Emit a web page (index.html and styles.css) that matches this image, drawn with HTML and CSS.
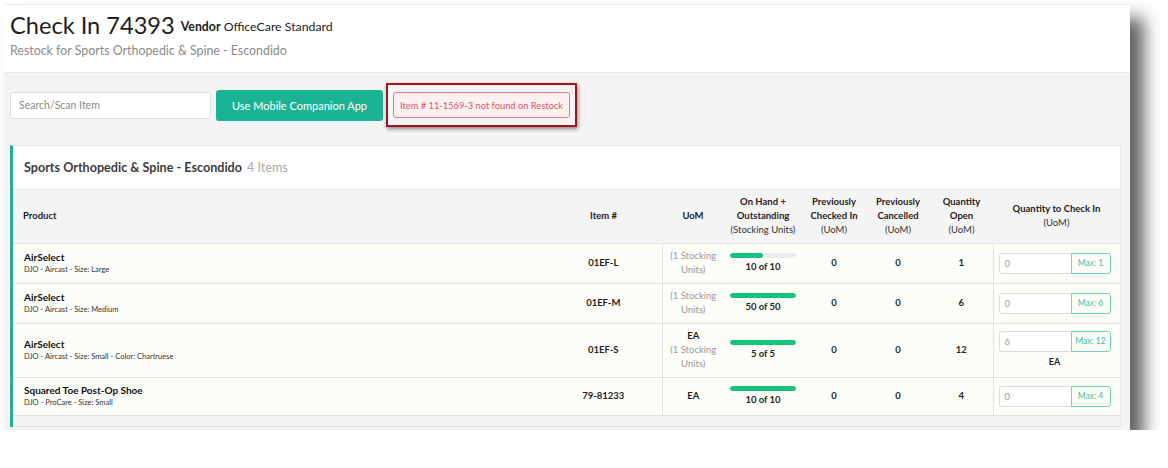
FILE: index.html
```html
<!DOCTYPE html>
<html>
<head>
<meta charset="utf-8">
<link rel="stylesheet" href="styles.css">
</head>
<body>
<div class="frame">
  <header class="page-head">
    <h1 class="title">Check In 74393 <span class="vendor"><b>Vendor</b> OfficeCare Standard</span></h1>
    <div class="subtitle">Restock for Sports Orthopedic &amp; Spine - Escondido</div>
  </header>
  <div class="toolbar">
    <input class="search" type="text" placeholder="Search/Scan Item">
    <button class="btn-app">Use Mobile Companion App</button>
    <div class="highlight">
      <div class="alert">Item # 11-1569-3 not found on Restock</div>
    </div>
  </div>
  <section class="card">
    <div class="card-head">Sports Orthopedic &amp; Spine - Escondido <span class="count">4 Items</span></div>
    <table class="grid">
      <colgroup>
        <col class="c-prod"><col class="c-item"><col class="c-uom"><col class="c-hand"><col class="c-prev"><col class="c-canc"><col class="c-open"><col class="c-qty">
      </colgroup>
      <thead>
        <tr>
          <th class="left">Product</th>
          <th>Item #</th>
          <th>UoM</th>
          <th>On Hand <span class="plus">+</span><br>Outstanding<br><span class="unit">(Stocking Units)</span></th>
          <th>Previously<br>Checked In<br><span class="unit">(UoM)</span></th>
          <th>Previously<br>Cancelled<br><span class="unit">(UoM)</span></th>
          <th>Quantity<br>Open<br><span class="unit">(UoM)</span></th>
          <th>Quantity to Check In<br><span class="unit">(UoM)</span></th>
        </tr>
      </thead>
      <tbody>
        <tr class="r1">
          <td class="left"><div class="pname">AirSelect</div><div class="pdesc">DJO - Aircast - Size: Large</div></td>
          <td>01EF-L</td>
          <td class="uom"><span class="su">(1 Stocking<br>Units)</span></td>
          <td><div class="bar"><div class="fill" style="width:50%"></div></div><div>10 of 10</div></td>
          <td>0</td>
          <td>0</td>
          <td>1</td>
          <td class="qty"><div class="qgroup"><span class="qin">0</span><span class="qmax">Max: 1</span></div></td>
        </tr>
        <tr class="r1">
          <td class="left"><div class="pname">AirSelect</div><div class="pdesc">DJO - Aircast - Size: Medium</div></td>
          <td>01EF-M</td>
          <td class="uom"><span class="su">(1 Stocking<br>Units)</span></td>
          <td><div class="bar"><div class="fill" style="width:100%"></div></div><div>50 of 50</div></td>
          <td>0</td>
          <td>0</td>
          <td>6</td>
          <td class="qty"><div class="qgroup"><span class="qin">0</span><span class="qmax">Max: 6</span></div></td>
        </tr>
        <tr class="r3">
          <td class="left"><div class="pname">AirSelect</div><div class="pdesc">DJO - Aircast - Size: Small - Color: Chartruese</div></td>
          <td>01EF-S</td>
          <td class="uom">EA<br><span class="su">(1 Stocking<br>Units)</span></td>
          <td><div class="bar"><div class="fill" style="width:100%"></div></div><div>5 of 5</div></td>
          <td>0</td>
          <td>0</td>
          <td>12</td>
          <td class="qty"><div class="qgroup"><span class="qin">6</span><span class="qmax">Max: 12</span></div><div class="qunit">EA</div></td>
        </tr>
        <tr class="r4">
          <td class="left"><div class="pname">Squared Toe Post-Op Shoe</div><div class="pdesc">DJO - ProCare - Size: Small</div></td>
          <td>79-81233</td>
          <td class="uom">EA</td>
          <td><div class="bar"><div class="fill" style="width:100%"></div></div><div>10 of 10</div></td>
          <td>0</td>
          <td>0</td>
          <td>4</td>
          <td class="qty"><div class="qgroup"><span class="qin">0</span><span class="qmax">Max: 4</span></div></td>
        </tr>
      </tbody>
    </table>
    <div class="card-foot"></div>
  </section>
</div>
</body>
</html>
```
FILE: styles.css
```css
* { box-sizing: border-box; }
html, body { margin: 0; padding: 0; background: #ffffff; }
body { font-family: "Lato", "Noto Sans", sans-serif; color: #222; }

.frame {
  margin: 4px 0 0 4px;
  width: 1126px;
  height: 426px;
  background: #f4f4f4;
  border-top: 1px solid #ececec;
  overflow: hidden;
  box-shadow: 14px 14px 16px rgba(0,0,0,0.62);
}

.page-head {
  background: #fff;
  height: 68px;
  padding: 7px 6px 0;
  border-bottom: 1px solid #e8e8e8;
}
.title {
  margin: 0;
  font-size: 23.6px;
  font-weight: 400;
  line-height: 27px;
  color: #1e1e1e;
  white-space: nowrap;
}
.vendor { font-size: 12.3px; color: #222; margin-left: 0; position: relative; top: -3px; }
.vendor b { font-weight: 700; }
.subtitle {
  margin-top: 0;
  font-size: 12.4px;
  line-height: 15px;
  color: #8a8a8a;
}

.toolbar {
  display: flex;
  align-items: center;
  height: 72px;
  padding: 0 6px 8px;
}
.search {
  width: 201px;
  height: 27px;
  border: 1px solid #dcdcdc;
  border-radius: 3px;
  background: #fff;
  padding: 0 8px;
  font-family: inherit;
  font-size: 10.5px;
  color: #666;
}
.search::placeholder { color: #8a8a8a; }
.btn-app {
  margin-left: 5px;
  width: 167px;
  height: 31px;
  border: 0;
  border-radius: 3px;
  background: #1ab394;
  color: #fff;
  font-family: inherit;
  font-size: 11px;
  padding: 0;
}
.highlight {
  margin-left: 3px;
  border: 2px solid #a3131b;
  padding: 7px 5px;
  box-shadow: 1px 2px 4px rgba(0,0,0,0.45);
}
.alert {
  width: 177px;
  height: 26px;
  border: 1px solid #ea7b80;
  border-radius: 3px;
  background: #fdf0f0;
  color: #e0555d;
  font-size: 9.3px;
  display: flex;
  align-items: center;
  justify-content: center;
  white-space: nowrap;
}

.card {
  margin: 0 9px 0 6px;
  background: #fff;
  border-left: 3px solid #1ab394;
  border-top: 1px solid #e7e7e7;
  border-right: 1px solid #e7e7e7;
}
.card-head {
  height: 44px;
  padding-left: 11px;
  display: flex;
  align-items: center;
  font-size: 12.6px;
  font-weight: 700;
  color: #3d3d3d;
  border-bottom: 1px solid #e7e7e7;
}
.count { font-weight: 400; color: #a8a8a8; margin-left: 5px; }

.grid {
  width: 1107px;
  border-collapse: collapse;
  table-layout: fixed;
}
.c-prod { width: 532px; }
.c-item { width: 117px; }
.c-uom { width: 62px; }
.c-hand { width: 78px; }
.c-prev { width: 64px; }
.c-canc { width: 64px; }
.c-open { width: 63px; }
.c-qty { width: 127px; }

.grid thead tr { background: #f4f4f4; height: 53px; }
.grid th {
  font-size: 9.5px;
  font-weight: 700;
  line-height: 14px;
  color: #1e1e1e;
  text-align: center;
  padding: 0;
  vertical-align: middle;
}
.grid th.left { text-align: left; padding-left: 10px; }
.grid th .unit { font-weight: 400; color: #333; }
.plus { color: #333; }

.grid tbody tr { background: #fdfdf8; border-top: 1px solid #e2e2e2; }
.grid tbody tr.r1 { height: 40px; }
.grid tbody tr.r3 { height: 54px; }
.grid tbody tr.r4 { height: 38px; }
.grid td {
  font-size: 9.5px;
  font-weight: 700;
  line-height: 14px;
  text-align: center;
  vertical-align: middle;
  padding: 0;
  color: #1e1e1e;
}
.grid td.left { text-align: left; padding-left: 11px; }
.pname { font-size: 10px; font-weight: 700; line-height: 13px; color: #111; }
.pdesc { font-size: 7.5px; font-weight: 400; line-height: 11px; color: #333; }
.grid td.uom { border-left: 1px solid #e2e2e2; }
.su { font-weight: 400; color: #9a9a9a; }

.bar {
  width: 66px;
  height: 5px;
  margin: 1px auto 2px;
  border-radius: 3px;
  background: #ececec;
  overflow: hidden;
}
.fill { height: 100%; background: #17c27c; border-radius: 3px; }

.grid td.qty { border-left: 1px solid #e2e2e2; text-align: left; padding-left: 5px; }
.qgroup { display: flex; width: 112px; height: 21px; }
.qin {
  flex: 1;
  background: #fff;
  border: 1px solid #dcdcdc;
  border-right: 0;
  border-radius: 3px 0 0 3px;
  font-weight: 400;
  color: #9a9a9a;
  font-size: 9.5px;
  line-height: 19px;
  padding-left: 5px;
}
.qmax {
  width: 40px;
  border: 1px solid #6fd3bd;
  border-radius: 0 3px 3px 0;
  color: #3cc1a3;
  font-weight: 400;
  font-size: 8.5px;
  line-height: 19px;
  text-align: center;
}
.qunit { text-align: center; width: 112px; font-size: 9px; margin-top: 3px; }

.card-foot {
  height: 12px;
  background: #f4f4f4;
  border-top: 1px solid #e2e2e2;
  border-bottom: 1px solid #e2e2e2;
}
```
